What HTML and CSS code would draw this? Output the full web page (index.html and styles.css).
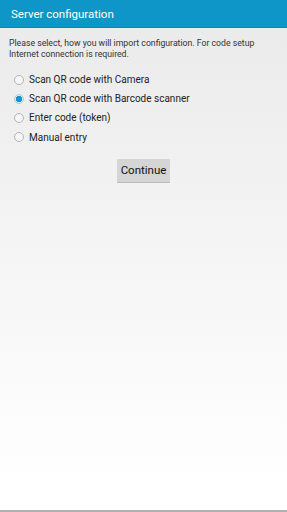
FILE: index.html
```html
<!DOCTYPE html>
<html lang="en">
  <head>
    <meta charset="UTF-8" />
    <meta name="viewport" content="width=device-width, initial-scale=1.0" />
    <title>Server configuration</title>
    <link rel="stylesheet" href="styles.css">
  </head>

  <body>
    <header class="action-bar">Server configuration</header>

    <main class="content">
      <p class="intro">
        Please select, how you will import configuration. For code setup
        Internet connection is required.
      </p>

      <div class="options">
        <label class="option">
          <input type="radio" name="source" value="camera" />
          Scan QR code with Camera
        </label>
        <label class="option">
          <input type="radio" name="source" value="scanner" checked />
          Scan QR code with Barcode scanner
        </label>
        <label class="option">
          <input type="radio" name="source" value="token" />
          Enter code (token)
        </label>
        <label class="option">
          <input type="radio" name="source" value="manual" />
          Manual entry
        </label>
      </div>

      <div class="actions">
        <button type="button" class="btn">Continue</button>
      </div>
    </main>

    <div class="bottom-line"></div>
  </body>
</html>
```

FILE: styles.css
```css
html,
body {
  height: 100%;
}

body {
  margin: 0;
  display: flex;
  flex-direction: column;
  font-family: Roboto, "Liberation Sans", sans-serif;
  background: linear-gradient(to bottom, #ebebeb 6%, #ffffff 95%);
  color: #222;
}

.action-bar {
  height: 28px;
  flex: none;
  box-sizing: border-box;
  padding: 0 11px;
  display: flex;
  align-items: center;
  background-color: #0f96c8;
  color: #ffffff;
  font-size: 11.5px;
  border-bottom: 1px solid #0b87b6;
}

.content {
  flex: 1;
  padding: 10px 9px 0;
}

.intro {
  margin: 0;
  padding-right: 5px;
  font-size: 8.7px;
  line-height: 10.5px;
  color: #333;
}

.options {
  margin-top: 11px;
  display: flex;
  flex-direction: column;
}

.option {
  height: 19.2px;
  display: flex;
  align-items: center;
  font-size: 10px;
  color: #222;
}

.option input {
  appearance: none;
  -webkit-appearance: none;
  margin: 0 5px 0 5px;
  width: 10px;
  height: 10px;
  border: 1px solid #b4b4b4;
  border-radius: 50%;
  background: #f6f6f6;
  box-sizing: border-box;
}

.option input:checked {
  border-color: #a9d0e0;
  background: radial-gradient(circle, #1a94cf 0 52%, #d9ebf3 58%);
}

.actions {
  margin-top: 12px;
  display: flex;
  justify-content: center;
}

.btn {
  width: 53px;
  height: 24px;
  padding: 0;
  border: none;
  border-bottom: 1px solid #b9b9b9;
  border-radius: 1px;
  background-color: #d5d5d5;
  font-family: Roboto, "Liberation Sans", sans-serif;
  font-size: 11.5px;
  color: #111;
}

.bottom-line {
  height: 2px;
  flex: none;
  background-color: #b0b0b0;
}
```
